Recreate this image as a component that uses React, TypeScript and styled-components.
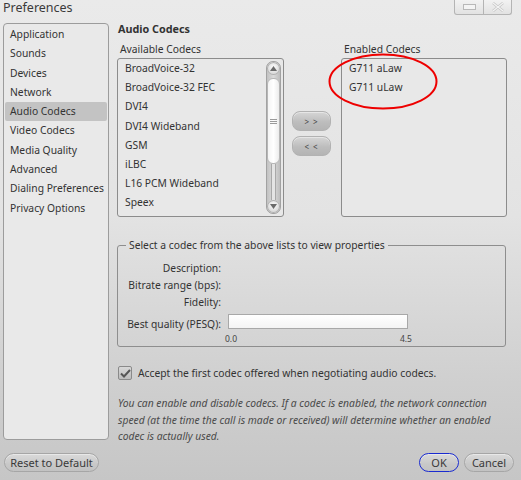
import React from 'react';
import styled, { createGlobalStyle } from 'styled-components';

const GlobalStyle = createGlobalStyle`
  html, body { margin: 0; padding: 0; }
  body { background: #d0d0d0; }
`;

const FONT = `"Noto Sans", "Open Sans", "DejaVu Sans", sans-serif`;

const Window = styled.div`
  position: relative;
  width: 521px;
  height: 480px;
  display: flex;
  flex-direction: column;
  overflow: hidden;
  background: linear-gradient(#eaeaea 0%, #e3e3e3 45%, #cfcfcf 80%, #c6c6c6 100%);
  font-family: ${FONT};
  font-size: 10.3px;
  color: #333;
`;

const TitleBar = styled.div`
  height: 22px;
  display: flex;
  justify-content: space-between;
  align-items: flex-start;
  padding: 0 9px 0 3px;
`;

const Title = styled.div`
  font-size: 12.5px;
  line-height: 16px;
  color: #3a3a3a;
`;

const WinButtons = styled.div`
  display: flex;
  height: 14px;
  border: 1px solid #b4b4b4;
  border-top: none;
  border-radius: 0 0 3px 3px;
  background: linear-gradient(#f2f2f2, #e2e2e2);
`;

const WinButton = styled.div<{ wide?: boolean }>`
  width: ${({ wide }) => (wide ? 27 : 28)}px;
  display: flex;
  align-items: center;
  justify-content: center;
  & + & {
    border-left: 1px solid #b4b4b4;
  }
`;

const Main = styled.div`
  height: 417px;
  display: flex;
  gap: 8px;
  padding: 1px 0 0 3px;
`;

const Nav = styled.div`
  width: 102px;
  height: 413px;
  border: 1px solid #9c9c9c;
  border-radius: 4px;
  background: #e9e9e9;
  padding: 1px 1px;
`;

const NavItem = styled.div<{ selected?: boolean }>`
  height: 19.3px;
  line-height: 19.3px;
  padding-left: 5px;
  border-radius: 2px;
  white-space: nowrap;
  background: ${({ selected }) => (selected ? '#c3c3c3' : 'transparent')};
`;

const Content = styled.div`
  width: 390px;
  display: flex;
  flex-direction: column;
`;

const Heading = styled.div`
  font-weight: bold;
  font-size: 10.8px;
  line-height: 14px;
  padding-left: 1px;
  margin-top: -1px;
`;

const ListsRow = styled.div`
  display: flex;
  margin-top: 6px;
`;

const ListColumn = styled.div<{ w: number }>`
  position: relative;
  width: ${({ w }) => w}px;
  display: flex;
  flex-direction: column;
`;

const ListLabel = styled.div`
  line-height: 14px;
  padding-left: 3px;
  margin-bottom: 2px;
`;

const ListBox = styled.div`
  height: 157px;
  border: 1px solid #8c8c8c;
  border-radius: 3px;
  background: #e8e8e8;
  display: flex;
  justify-content: space-between;
  padding: 0 2px 0 0;
`;

const Items = styled.div`
  padding: 0 0 0 7px;
`;

const Item = styled.div`
  height: 19.2px;
  line-height: 19.2px;
  white-space: nowrap;
`;

const Scrollbar = styled.div`
  width: 13px;
  height: 151px;
  margin-top: 2px;
  border: 1px solid #a2a2a2;
  border-radius: 7px;
  background: linear-gradient(90deg, #c2c2c2, #dadada 50%, #bdbdbd);
  display: flex;
  flex-direction: column;
  align-items: center;
  overflow: hidden;
`;

const ScrollArrow = styled.div`
  width: 13px;
  height: 13px;
  flex: none;
  border-radius: 50%;
  background: radial-gradient(circle at 50% 40%, #fdfdfd, #d6d6d6 70%, #b8b8b8);
  box-shadow: inset 0 0 0 1px #b0b0b0;
  display: flex;
  align-items: center;
  justify-content: center;
`;

const Thumb = styled.div`
  width: 11px;
  height: 84px;
  margin-top: 3px;
  flex: none;
  border-radius: 6px;
  border: 1px solid #b6b6b6;
  background: linear-gradient(90deg, #f4f4f4, #ffffff 50%, #ececec);
  display: flex;
  flex-direction: column;
  align-items: center;
  justify-content: center;
  gap: 1px;
`;

const Grip = styled.div`
  width: 7px;
  height: 1px;
  background: #9a9a9a;
`;

const Track = styled.div`
  flex: 1;
  width: 3px;
  border-left: 1px solid #a8a8a8;
  border-right: 1px solid #a8a8a8;
  background: #e4e4e4;
`;

const MoveColumn = styled.div`
  width: 39px;
  margin: 0 10px 0 8px;
  padding-top: 69px;
  display: flex;
  flex-direction: column;
  gap: 5px;
`;

const MoveButton = styled.div`
  height: 18px;
  border-radius: 8px;
  border: 1px solid #b2b2b2;
  background: linear-gradient(#d6d6d6, #bdbdbd 55%, #b4b4b4);
  box-shadow: inset 0 1px 0 #e6e6e6;
  display: flex;
  align-items: center;
  justify-content: center;
  font-size: 8px;
  letter-spacing: 1px;
  color: #444;
`;

const Circle = styled.svg`
  position: absolute;
  left: -13px;
  top: 11px;
  pointer-events: none;
`;

const Group = styled.fieldset`
  margin: 22px 1px 0 0;
  padding: 4px 0 8px 8px;
  border: 1px solid #8e8e8e;
  border-radius: 3px;
  height: 108px;
  box-sizing: border-box;
`;

const Legend = styled.legend`
  padding: 0 3px;
  line-height: 13px;
`;

const PropGrid = styled.div`
  display: grid;
  grid-template-columns: 97px 180px;
  column-gap: 7px;
  grid-auto-rows: 17px;
  align-items: center;
  margin-top: 3px;
  margin-left: -2px;
`;

const PropLabel = styled.div`
  text-align: right;
  white-space: nowrap;
`;

const Meter = styled.div`
  height: 13px;
  margin-top: 5px;
  border: 1px solid #a8a8a8;
  background: linear-gradient(#ffffff, #f4f4f4);
`;

const Scale = styled.div`
  display: flex;
  justify-content: space-between;
  font-size: 8.5px;
  color: #444;
  margin: 6px -4px 0 -3px;
`;

const CheckRow = styled.label`
  display: flex;
  align-items: center;
  gap: 6px;
  margin: 19px 0 0 1px;
`;

const CheckBox = styled.div`
  width: 12px;
  height: 12px;
  border: 1px solid #8a8a8a;
  border-radius: 2px;
  background: linear-gradient(#d8d8d8, #bcbcbc);
  display: flex;
  align-items: center;
  justify-content: center;
`;

const Note = styled.p`
  margin: 15px 0 0 1px;
  font-style: italic;
  line-height: 16.5px;
  color: #4a4a4a;
  width: 392px;
`;

const Footer = styled.div`
  flex: 1;
  display: flex;
  align-items: flex-start;
  justify-content: space-between;
  padding: 13px 7px 0 4px;
`;

const ButtonGroup = styled.div`
  display: flex;
  gap: 5px;
`;

const PillButton = styled.div<{ primary?: boolean; w: number }>`
  width: ${({ w }) => w}px;
  height: 19px;
  box-sizing: border-box;
  border-radius: 10px;
  border: ${({ primary }) => (primary ? '1.5px solid #1a2bd0' : '1px solid #a6a6a6')};
  background: linear-gradient(#dadada, #c8c8c8 60%, #c2c2c2);
  box-shadow: inset 0 1px 0 #e8e8e8;
  display: flex;
  align-items: center;
  justify-content: center;
  font-size: 11px;
  color: #3a3a3a;
  white-space: nowrap;
`;

const navItems = [
  'Application',
  'Sounds',
  'Devices',
  'Network',
  'Audio Codecs',
  'Video Codecs',
  'Media Quality',
  'Advanced',
  'Dialing Preferences',
  'Privacy Options',
];

const available = [
  'BroadVoice-32',
  'BroadVoice-32 FEC',
  'DVI4',
  'DVI4 Wideband',
  'GSM',
  'iLBC',
  'L16 PCM Wideband',
  'Speex',
];

const enabled = ['G711 aLaw', 'G711 uLaw'];

const Arrow = ({ down }: { down?: boolean }) => (
  <svg width="7" height="5" viewBox="0 0 7 5">
    <path d={down ? 'M0 0 L7 0 L3.5 5 Z' : 'M0 5 L7 5 L3.5 0 Z'} fill="#6a6a6a" />
  </svg>
);

const App = () => {
  return (
    <Window>
      <GlobalStyle />
      <TitleBar>
        <Title>Preferences</Title>
        <WinButtons>
          <WinButton>
            <svg width="13" height="6" viewBox="0 0 13 6">
              <rect x="0.5" y="0.5" width="12" height="5" fill="#f4f4f4" stroke="#b8b8b8" />
            </svg>
          </WinButton>
          <WinButton wide>
            <svg width="12" height="10" viewBox="0 0 12 10">
              <path d="M1 1 L11 9 M11 1 L1 9" stroke="#c4c4c4" strokeWidth="2.6" />
              <path d="M1 1 L11 9 M11 1 L1 9" stroke="#f4f4f4" strokeWidth="1.2" />
            </svg>
          </WinButton>
        </WinButtons>
      </TitleBar>

      <Main>
        <Nav>
          {navItems.map((n) => (
            <NavItem key={n} selected={n === 'Audio Codecs'}>
              {n}
            </NavItem>
          ))}
        </Nav>

        <Content>
          <Heading>Audio Codecs</Heading>
          <ListsRow>
            <ListColumn w={167}>
              <ListLabel>Available Codecs</ListLabel>
              <ListBox>
                <Items>
                  {available.map((c) => (
                    <Item key={c}>{c}</Item>
                  ))}
                </Items>
                <Scrollbar>
                  <ScrollArrow>
                    <Arrow />
                  </ScrollArrow>
                  <Thumb>
                    <Grip />
                    <Grip />
                    <Grip />
                  </Thumb>
                  <Track />
                  <ScrollArrow>
                    <Arrow down />
                  </ScrollArrow>
                </Scrollbar>
              </ListBox>
            </ListColumn>

            <MoveColumn>
              <MoveButton>&gt; &gt;</MoveButton>
              <MoveButton>&lt; &lt;</MoveButton>
            </MoveColumn>

            <ListColumn w={166}>
              <ListLabel>Enabled Codecs</ListLabel>
              <ListBox>
                <Items>
                  {enabled.map((c) => (
                    <Item key={c}>{c}</Item>
                  ))}
                </Items>
              </ListBox>
              <Circle width="110" height="57" viewBox="0 0 110 57">
                <ellipse cx="55" cy="28.5" rx="53.5" ry="27" fill="none" stroke="#ee0000" strokeWidth="2" />
              </Circle>
            </ListColumn>
          </ListsRow>

          <Group>
            <Legend>Select a codec from the above lists to view properties</Legend>
            <PropGrid>
              <PropLabel>Description:</PropLabel>
              <div />
              <PropLabel>Bitrate range (bps):</PropLabel>
              <div />
              <PropLabel>Fidelity:</PropLabel>
              <div />
              <PropLabel style={{ marginTop: 10 }}>Best quality (PESQ):</PropLabel>
              <Meter />
              <div />
              <Scale>
                <span>0.0</span>
                <span>4.5</span>
              </Scale>
            </PropGrid>
          </Group>

          <CheckRow>
            <CheckBox>
              <svg width="11" height="9" viewBox="0 0 11 9">
                <path d="M1 4.5 L4 7.5 L10 1" fill="none" stroke="#555" strokeWidth="2" />
              </svg>
            </CheckBox>
            Accept the first codec offered when negotiating audio codecs.
          </CheckRow>

          <Note>
            You can enable and disable codecs. If a codec is enabled, the network connection speed (at the
            time the call is made or received) will determine whether an enabled codec is actually used.
          </Note>
        </Content>
      </Main>

      <Footer>
        <PillButton w={95}>Reset to Default</PillButton>
        <ButtonGroup>
          <PillButton primary w={40}>
            OK
          </PillButton>
          <PillButton w={50}>Cancel</PillButton>
        </ButtonGroup>
      </Footer>
    </Window>
  );
};

export default App;
